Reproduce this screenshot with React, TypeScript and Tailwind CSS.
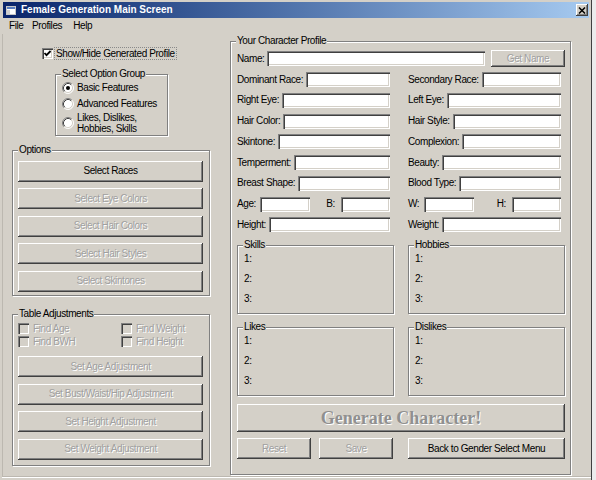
import React from "react";

const BTN =
  "flex items-center justify-center whitespace-nowrap bg-[#d4d0c8] shadow-[inset_-1px_-1px_0_#404040,inset_1px_1px_0_#ffffff,inset_-2px_-2px_0_#808080]";
const SUNK =
  "shadow-[inset_1px_1px_0_#808080,inset_2px_2px_0_#404040,inset_-1px_-1px_0_#ffffff,inset_-2px_-2px_0_#d4d0c8]";
const ETCH =
  "relative border border-[#808080] shadow-[1px_1px_0_#ffffff,inset_1px_1px_0_#ffffff]";
const DIS = "text-[#a0a0a0] [text-shadow:1px_1px_0_#ffffff]";

type BP = { label: string; disabled?: boolean; className?: string };
function Btn({ label, disabled, className = "" }: BP) {
  return (
    <div className={`${BTN} ${disabled ? DIS : "text-black"} ${className}`}>
      {label}
    </div>
  );
}

function Group({
  title,
  className = "",
  children,
}: {
  title: string;
  className?: string;
  children?: React.ReactNode;
}) {
  return (
    <div className={`${ETCH} ${className}`}>
      <span className="absolute -top-[7px] left-[5px] bg-[#d4d0c8] px-px leading-[12px] whitespace-nowrap">
        {title}
      </span>
      {children}
    </div>
  );
}

function Check({ checked, disabled }: { checked?: boolean; disabled?: boolean }) {
  return (
    <div
      className={`w-[11px] h-[11px] shrink-0 flex items-center justify-center ${
        disabled ? "bg-[#d4d0c8]" : "bg-white"
      } ${SUNK}`}
    >
      {checked && (
        <svg width="11" height="11" viewBox="0 0 11 11">
          <path d="M2.5 5 L4.5 7.2 L8.6 3" stroke="#000" strokeWidth="1.8" fill="none" />
        </svg>
      )}
    </div>
  );
}

function Radio({ checked }: { checked?: boolean }) {
  return (
    <svg width="12" height="12" viewBox="0 0 12 12" className="shrink-0">
      <circle cx="6" cy="6" r="5" fill="#ffffff" />
      <path d="M2.11 9.89 A5.5 5.5 0 0 1 9.89 2.11" stroke="#808080" strokeWidth="1" fill="none" />
      <path d="M9.89 2.11 A5.5 5.5 0 0 1 2.11 9.89" stroke="#ffffff" strokeWidth="1" fill="none" />
      <path d="M2.82 9.18 A4.5 4.5 0 0 1 9.18 2.82" stroke="#404040" strokeWidth="1" fill="none" />
      <path d="M9.18 2.82 A4.5 4.5 0 0 1 2.82 9.18" stroke="#d4d0c8" strokeWidth="1" fill="none" />
      {checked && <circle cx="6" cy="6" r="2" fill="#000" />}
    </svg>
  );
}

function Field({ label }: { label: string }) {
  return (
    <div className="flex-1 flex items-center h-[15px] min-w-0">
      <span className="whitespace-nowrap">{label}</span>
      <div className={`ml-[3px] h-[15px] flex-1 bg-white ${SUNK}`} />
    </div>
  );
}

function Box({ w, ml }: { w: string; ml: string }) {
  return <div className={`${w} ${ml} h-[15px] bg-white ${SUNK}`} />;
}

function ListGroup({ title }: { title: string }) {
  return (
    <Group title={title} className="h-[69px]">
      <div className="pt-[7px] pl-[6px] flex flex-col gap-[8px]">
        <span className="h-[12px]">1:</span>
        <span className="h-[12px]">2:</span>
        <span className="h-[12px]">3:</span>
      </div>
    </Group>
  );
}

function DisCheck({ label }: { label: string }) {
  return (
    <div className="h-[13px] flex items-center">
      <Check disabled />
      <span className={`ml-[4px] ${DIS}`}>{label}</span>
    </div>
  );
}

export default function App() {
  return (
    <div className="w-[596px] h-[480px] overflow-hidden bg-[#ececec] flex font-['Liberation_Sans',Arial,sans-serif] text-[10px] leading-[12px] tracking-[-0.4px] text-black">
      <div className="w-[592px] h-[480px] shrink-0 bg-[#d4d0c8] border-r border-[#404040] flex flex-col">
        {/* Title bar */}
        <div className="mt-[2px] ml-[3px] mr-[2px] h-[16px] shrink-0 flex items-center bg-linear-to-r from-[#0a246a] to-[#a6caf0]">
          <svg width="10" height="9" viewBox="0 0 10 9" className="ml-[3px] shrink-0">
            <rect x="0.5" y="0.5" width="9" height="8" fill="#ffffff" stroke="#c8c8c8" />
            <rect x="1" y="1" width="8" height="2" fill="#5a7ec0" />
            <rect x="1" y="4" width="3" height="4" fill="#d0d0d0" />
          </svg>
          <span className="ml-[5px] font-bold text-white tracking-normal text-[10px] whitespace-nowrap">
            Female Generation Main Screen
          </span>
          <div className={`ml-auto mr-[1px] w-[12px] h-[12px] ${BTN}`}>
            <svg width="8" height="7" viewBox="0 0 8 7">
              <path d="M1 0.5 L7 6.5 M7 0.5 L1 6.5" stroke="#000" strokeWidth="1.5" />
            </svg>
          </div>
        </div>

        {/* Menu bar */}
        <div className="h-[16px] shrink-0 flex items-center">
          <span className="ml-[9px]">File</span>
          <span className="ml-[8.5px]">Profiles</span>
          <span className="ml-[11px]">Help</span>
        </div>

        {/* Client */}
        <div className="ml-[2px] h-[443px] shrink-0 flex border-l border-b border-[#bcb8b0] shadow-[0_1px_0_#ffffff]">
          {/* Left column */}
          <div className="w-[227px] shrink-0 flex flex-col">
            <div className="mt-[13px] ml-[39px] h-[12px] flex items-center">
              <Check checked />
              <span className="ml-[2px] px-px leading-[11px] outline-1 outline-dotted outline-[#8a8a8a] whitespace-nowrap">
                Show/Hide Generated Profile
              </span>
            </div>

            <Group title="Select Option Group" className="mt-[15px] ml-[52px] w-[113px] h-[62px] shrink-0">
              <div className="pt-[7px] pl-[6px] flex flex-col">
                <div className="h-[12px] flex items-center">
                  <Radio checked />
                  <span className="ml-[3px] whitespace-nowrap">Basic Features</span>
                </div>
                <div className="mt-[4px] h-[12px] flex items-center">
                  <Radio />
                  <span className="ml-[3px] whitespace-nowrap">Advanced Features</span>
                </div>
                <div className="mt-[2px] flex items-center">
                  <Radio />
                  <span className="ml-[3px] leading-[11px] whitespace-nowrap">
                    Likes, Dislikes,
                    <br />
                    Hobbies, Skills
                  </span>
                </div>
              </div>
            </Group>

            <Group title="Options" className="mt-[14px] ml-[9px] w-[198px] h-[146px] shrink-0">
              <div className="pt-[9.5px] pl-[5px] flex flex-col gap-[6.5px]">
                <Btn label="Select Races" className="w-[185px] h-[21px]" />
                <Btn label="Select Eye Colors" disabled className="w-[185px] h-[21px]" />
                <Btn label="Select Hair Colors" disabled className="w-[185px] h-[21px]" />
                <Btn label="Select Hair Styles" disabled className="w-[185px] h-[21px]" />
                <Btn label="Select Skintones" disabled className="w-[185px] h-[21px]" />
              </div>
            </Group>

            <Group title="Table Adjustments" className="mt-[18px] ml-[9px] w-[198px] h-[152px] shrink-0">
              <div className="pt-[7px] pl-[5px]">
                <div className="grid grid-cols-[103px_82px]">
                  <DisCheck label="Find Age" />
                  <DisCheck label="Find Weight" />
                  <DisCheck label="Find BWH" />
                  <DisCheck label="Find Height" />
                </div>
                <div className="mt-[8px] flex flex-col gap-[6.5px]">
                  <Btn label="Set Age Adjustment" disabled className="w-[185px] h-[21px]" />
                  <Btn label="Set Bust/Waist/Hip Adjustment" disabled className="w-[185px] h-[21px]" />
                  <Btn label="Set Height Adjustment" disabled className="w-[185px] h-[21px]" />
                  <Btn label="Set Weight Adjustment" disabled className="w-[185px] h-[21px]" />
                </div>
              </div>
            </Group>
          </div>

          {/* Right column */}
          <Group title="Your Character Profile" className="mt-[7px] w-[341px] h-[434px] shrink-0">
            <div className="pt-[8px] pl-[6px] flex flex-col">
              <div className="flex items-center h-[17px] w-[328px]">
                <span>Name:</span>
                <div className={`ml-[3px] h-[15px] flex-1 bg-white ${SUNK}`} />
                <Btn label="Get Name" disabled className="ml-[6px] w-[74px] h-[17px]" />
              </div>

              <div className="mt-[5px] w-[324px] flex flex-col gap-[5.75px]">
                <div className="flex gap-[18px]">
                  <Field label="Dominant Race:" />
                  <Field label="Secondary Race:" />
                </div>
                <div className="flex gap-[18px]">
                  <Field label="Right Eye:" />
                  <Field label="Left Eye:" />
                </div>
                <div className="flex gap-[18px]">
                  <Field label="Hair Color:" />
                  <Field label="Hair Style:" />
                </div>
                <div className="flex gap-[18px]">
                  <Field label="Skintone:" />
                  <Field label="Complexion:" />
                </div>
                <div className="flex gap-[18px]">
                  <Field label="Temperment:" />
                  <Field label="Beauty:" />
                </div>
                <div className="flex gap-[18px]">
                  <Field label="Breast Shape:" />
                  <Field label="Blood Type:" />
                </div>
                <div className="flex gap-[18px]">
                  <div className="flex-1 flex items-center justify-between h-[15px]">
                    <div className="flex items-center">
                      <span>Age:</span>
                      <Box w="w-[50px]" ml="ml-[4px]" />
                    </div>
                    <div className="flex items-center">
                      <span>B:</span>
                      <Box w="w-[49px]" ml="ml-[6px]" />
                    </div>
                  </div>
                  <div className="flex-1 flex items-center justify-between h-[15px]">
                    <div className="flex items-center">
                      <span>W:</span>
                      <Box w="w-[50px]" ml="ml-[5px]" />
                    </div>
                    <div className="flex items-center">
                      <span>H:</span>
                      <Box w="w-[49px]" ml="ml-[6px]" />
                    </div>
                  </div>
                </div>
                <div className="flex gap-[18px]">
                  <Field label="Height:" />
                  <Field label="Weight:" />
                </div>
              </div>

              <div className="mt-[12.75px] w-[328px] grid grid-cols-2 gap-x-[14px] gap-y-[13px]">
                <ListGroup title="Skills" />
                <ListGroup title="Hobbies" />
                <ListGroup title="Likes" />
                <ListGroup title="Dislikes" />
              </div>

              <div
                className={`mt-[8px] w-[328px] h-[28px] ${BTN} text-[#909090] [text-shadow:1px_1px_0_#ffffff] font-['Liberation_Serif','Times_New_Roman',serif] font-bold text-[18px] tracking-normal`}
              >
                Generate Character!
              </div>

              <div className="mt-[6px] flex">
                <Btn label="Reset" disabled className="w-[74px] h-[21px]" />
                <Btn label="Save" disabled className="ml-[8px] w-[74px] h-[21px]" />
                <Btn label="Back to Gender Select Menu" className="ml-[15px] w-[157px] h-[21px]" />
              </div>
            </div>
          </Group>
        </div>
      </div>
    </div>
  );
}
